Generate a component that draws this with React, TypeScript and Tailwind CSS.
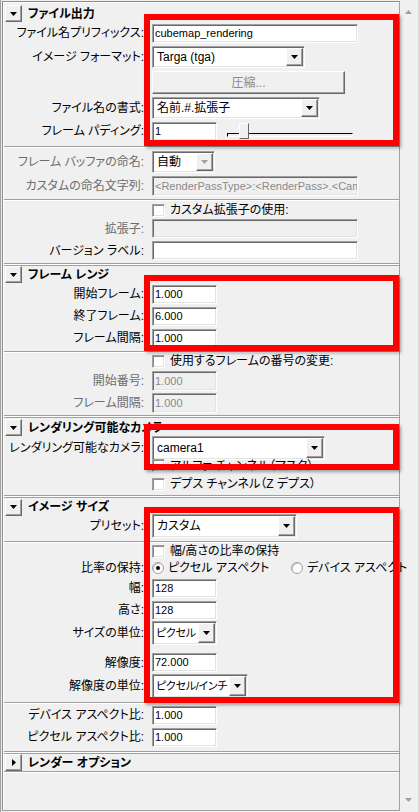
import React from "react";

const Arrow = ({ gray }: { gray?: boolean }) => (
  <svg width="7" height="4" viewBox="0 0 7 4">
    <path d="M0 0H7L3.5 4Z" fill={gray ? "#a0a0a0" : "#000"} />
  </svg>
);

function Label({ children, gray }: { children?: React.ReactNode; gray?: boolean }) {
  return (
    <div
      className={`w-[140px] shrink-0 text-right whitespace-nowrap text-[12px] leading-none ${
        gray ? "text-[#6d6d6d]" : "text-black"
      }`}
    >
      {children}
    </div>
  );
}

function Field({ cls, value, disabled }: { cls: string; value?: string; disabled?: boolean }) {
  return (
    <div
      className={`${cls} ml-[8px] shrink-0 flex items-center pl-[2px] text-[11px] leading-none overflow-hidden whitespace-nowrap border border-t-[#a0a0a0] border-l-[#a0a0a0] border-r-white border-b-white shadow-[inset_1px_1px_0_#696969,inset_-1px_-1px_0_#e3e3e3] ${
        disabled ? "bg-[#f0f0f0] text-[#8a8a8a]" : "bg-white text-black"
      }`}
    >
      {value}
    </div>
  );
}

function Dropdown({
  cls,
  value,
  disabled,
  small,
}: {
  cls: string;
  value: string;
  disabled?: boolean;
  small?: boolean;
}) {
  return (
    <div
      className={`${cls} ml-[8px] shrink-0 flex bg-white border border-t-[#a0a0a0] border-l-[#a0a0a0] border-r-white border-b-white shadow-[inset_1px_1px_0_#696969,inset_-1px_-1px_0_#e3e3e3] p-[1px]`}
    >
      <div
        className={`flex-1 flex items-center overflow-hidden whitespace-nowrap leading-none text-black ${
          small ? "text-[11px] pl-[2px] tracking-[-0.3px]" : "text-[12px] pl-[3px]"
        }`}
      >
        {value}
      </div>
      <div className="w-[17px] shrink-0 h-full flex items-center justify-center bg-[#f0f0f0] border border-t-white border-l-white border-r-[#696969] border-b-[#696969] shadow-[inset_-1px_-1px_0_#a0a0a0]">
        <Arrow gray={disabled} />
      </div>
    </div>
  );
}

function Check({ label }: { label: string }) {
  return (
    <div className="flex items-center pl-[148px]">
      <div className="w-[13px] h-[13px] shrink-0 bg-white border border-t-[#a0a0a0] border-l-[#a0a0a0] border-r-white border-b-white shadow-[inset_1px_1px_0_#8a8a8a,inset_-1px_-1px_0_#e3e3e3]" />
      <div className="ml-[5px] text-[12px] leading-none whitespace-nowrap text-black">{label}</div>
    </div>
  );
}

function Radio({ on }: { on?: boolean }) {
  return (
    <div className="w-[12px] h-[12px] shrink-0 rounded-full bg-white border border-[#a0a0a0] shadow-[inset_1px_1px_0_#c8c8c8] flex items-center justify-center">
      {on ? <div className="w-[4px] h-[4px] rounded-full bg-black" /> : null}
    </div>
  );
}

function Header({ title, cls, open = true }: { title: string; cls: string; open?: boolean }) {
  return (
    <div className={`${cls} shrink-0 flex items-center pl-[1px]`}>
      <div className="w-[17px] h-[17px] shrink-0 flex items-center justify-center bg-[#f0f0f0] border border-t-white border-l-white border-r-[#696969] border-b-[#696969] shadow-[inset_-1px_-1px_0_#a0a0a0]">
        {open ? (
          <Arrow />
        ) : (
          <svg width="4" height="7" viewBox="0 0 4 7">
            <path d="M0 0L4 3.5L0 7Z" fill="#000" />
          </svg>
        )}
      </div>
      <div className="ml-[6px] text-[12px] font-bold leading-none whitespace-nowrap text-black">{title}</div>
    </div>
  );
}

const Groove = () => (
  <div className="shrink-0">
    <div className="h-px bg-[#a0a0a0]" />
    <div className="h-px bg-white" />
  </div>
);

const Sep = () => (
  <div className="shrink-0">
    <div className="h-px bg-[#a0a0a0]" />
    <div className="h-px bg-white" />
    <div className="h-px bg-[#a0a0a0]" />
  </div>
);

function Row({ cls, children }: { cls: string; children: React.ReactNode }) {
  return <div className={`${cls} shrink-0 flex items-center`}>{children}</div>;
}

export default function App() {
  return (
    <div className="w-[419px] h-[812px] relative overflow-hidden bg-[#f0f0f0] flex font-['Liberation_Sans','Noto_Sans_CJK_JP',sans-serif] [font-feature-settings:'palt'] text-black">
      {/* main panel */}
      <div className="w-[400px] h-full flex flex-col border-l border-[#a0a0a0]">
        <div className="flex-1 flex flex-col ml-[1px] mt-[1px] mb-[1px] border-l border-t border-[#8c8c8c] border-r border-r-[#a0a0a0] border-b border-b-[#a0a0a0]">
          <div className="flex-1 flex flex-col border-l border-t border-white">
            {/* ファイル出力 */}
            <Header title="ファイル出力" cls="h-[21px]" />
            <Row cls="h-[18px]">
              <Label>ファイル名プリフィックス:</Label>
              <Field cls="w-[206px] h-[19px]" value="cubemap_rendering" />
            </Row>
            <Row cls="h-[29px]">
              <Label>イメージ フォーマット:</Label>
              <Dropdown cls="w-[153px] h-[22px]" value="Targa (tga)" />
            </Row>
            <Row cls="h-[23px]">
              <div className="w-[148px] shrink-0" />
              <div className="w-[193px] h-[23px] flex items-center justify-center bg-[#f0f0f0] border border-t-white border-l-white border-r-[#696969] border-b-[#696969] shadow-[inset_-1px_-1px_0_#a0a0a0] text-[12px] leading-none text-[#8d8d8d]">
                圧縮...
              </div>
            </Row>
            <Row cls="h-[27px]">
              <Label>ファイル名の書式:</Label>
              <Dropdown cls="w-[168px] h-[22px]" value="名前.#.拡張子" />
            </Row>
            <Row cls="h-[20px]">
              <Label>フレーム パディング:</Label>
              <Field cls="w-[65px] h-[19px]" value="1" />
              <div className="relative ml-[10px] w-[126px] h-[16px]">
                <div className="absolute left-0 right-0 top-[10px] h-[4px] border-t border-l border-t-black border-l-black border-b border-r border-b-white border-r-white" />
                <div className="absolute left-[12px] top-0 w-[10px] h-[16px] bg-[#f0f0f0] border border-t-white border-l-white border-r-[#696969] border-b-[#696969]" />
              </div>
            </Row>
            <div className="h-[5px] shrink-0" />
            <Groove />
            <Row cls="h-[28px]">
              <Label gray>フレーム バッファの命名:</Label>
              <Dropdown cls="w-[63px] h-[22px]" value="自動" disabled />
            </Row>
            <Row cls="h-[20px]">
              <Label gray>カスタムの命名文字列:</Label>
              <Field cls="w-[206px] h-[20px]" value="<RenderPassType>:<RenderPass>.<Camera>" disabled />
            </Row>
            <div className="h-[3px] shrink-0" />
            <Groove />
            <Row cls="h-[18px]">
              <Check label="カスタム拡張子の使用:" />
            </Row>
            <Row cls="h-[19px]">
              <Label gray>拡張子:</Label>
              <Field cls="w-[206px] h-[19px]" disabled />
            </Row>
            <Row cls="h-[25px]">
              <Label>バージョン ラベル:</Label>
              <Field cls="w-[206px] h-[19px]" />
            </Row>
            <Sep />

            {/* フレーム レンジ */}
            <Header title="フレーム レンジ" cls="h-[17px]" />
            <Row cls="h-[22px]">
              <Label>開始フレーム:</Label>
              <Field cls="w-[65px] h-[19px]" value="1.000" />
            </Row>
            <Row cls="h-[22px]">
              <Label>終了フレーム:</Label>
              <Field cls="w-[65px] h-[19px]" value="6.000" />
            </Row>
            <Row cls="h-[22px]">
              <Label>フレーム間隔:</Label>
              <Field cls="w-[65px] h-[19px]" value="1.000" />
            </Row>
            <div className="h-[2px] shrink-0" />
            <Groove />
            <Row cls="h-[16px]">
              <Check label="使用するフレームの番号の変更:" />
            </Row>
            <Row cls="h-[24px]">
              <Label gray>開始番号:</Label>
              <Field cls="w-[65px] h-[20px]" value="1.000" disabled />
            </Row>
            <Row cls="h-[20px]">
              <Label gray>フレーム間隔:</Label>
              <Field cls="w-[65px] h-[20px]" value="1.000" disabled />
            </Row>
            <div className="h-[2px] shrink-0" />
            <Sep />

            {/* レンダリング可能なカメラ */}
            <Header title="レンダリング可能なカメラ" cls="h-[19px]" />
            <Row cls="h-[21px]">
              <Label>レンダリング可能なカメラ:</Label>
              <Dropdown cls="w-[173px] h-[24px]" value="camera1" />
            </Row>
            <Row cls="h-[15px]">
              <Check label="アルファ チャンネル（マスク）" />
            </Row>
            <Row cls="h-[22px]">
              <Check label="デプス チャンネル（Z デプス）" />
            </Row>
            <Sep />

            {/* イメージ サイズ */}
            <Header title="イメージ サイズ" cls="h-[18px]" />
            <Row cls="h-[20px]">
              <Label>プリセット:</Label>
              <Dropdown cls="w-[145px] h-[24px]" value="カスタム" />
            </Row>
            <div className="h-[5px] shrink-0" />
            <Groove />
            <Row cls="h-[16px]">
              <Check label="幅/高さの比率の保持" />
            </Row>
            <Row cls="h-[18px]">
              <Label>比率の保持:</Label>
              <div className="ml-[8px] w-[139px] shrink-0 flex items-center">
                <Radio on />
                <div className="ml-[4px] text-[12px] leading-none whitespace-nowrap">ピクセル アスペクト</div>
              </div>
              <div className="flex items-center">
                <Radio />
                <div className="ml-[4px] text-[12px] leading-none whitespace-nowrap">デバイス アスペクト</div>
              </div>
            </Row>
            <Row cls="h-[22px]">
              <Label>幅:</Label>
              <Field cls="w-[65px] h-[19px]" value="128" />
            </Row>
            <Row cls="h-[22px]">
              <Label>高さ:</Label>
              <Field cls="w-[65px] h-[19px]" value="128" />
            </Row>
            <Row cls="h-[24px]">
              <Label>サイズの単位:</Label>
              <Dropdown cls="w-[65px] h-[24px]" value="ピクセル" small />
            </Row>
            <Row cls="h-[21px] mt-[7px]">
              <Label>解像度:</Label>
              <Field cls="w-[65px] h-[19px]" value="72.000" />
            </Row>
            <Row cls="h-[26px]">
              <Label>解像度の単位:</Label>
              <Dropdown cls="w-[96px] h-[24px]" value="ピクセル/インチ" small />
            </Row>
            <div className="h-[3px] shrink-0" />
            <Groove />
            <Row cls="h-[22px]">
              <Label>デバイス アスペクト比:</Label>
              <Field cls="w-[65px] h-[19px]" value="1.000" />
            </Row>
            <Row cls="h-[22px]">
              <Label>ピクセル アスペクト比:</Label>
              <Field cls="w-[65px] h-[19px]" value="1.000" />
            </Row>
            <div className="h-[3px] shrink-0" />
            <Sep />

            {/* レンダー オプション */}
            <Header title="レンダー オプション" cls="h-[17px]" open={false} />
            <Groove />
            <div className="flex-1" />
          </div>
        </div>
      </div>

      {/* scrollbar */}
      <div className="w-[19px] h-full flex flex-col items-center justify-between pt-[10px] pb-[10px] pr-[2px] border-r border-[#dcdcdc]">
        <svg width="7" height="4" viewBox="0 0 7 4">
          <path d="M0 4H7L3.5 0Z" fill="#a0a0a0" />
        </svg>
        <svg width="7" height="4" viewBox="0 0 7 4">
          <path d="M0 0H7L3.5 4Z" fill="#a0a0a0" />
        </svg>
      </div>

      {/* red annotation boxes */}
      <div className="absolute left-[144px] top-[14px] w-[255px] h-[132px] border-[6px] border-[#ff0000] shadow-[2px_2px_3px_rgba(0,0,0,0.35)] pointer-events-none" />
      <div className="absolute left-[144px] top-[275px] w-[255px] h-[76px] border-[6px] border-[#ff0000] shadow-[2px_2px_3px_rgba(0,0,0,0.35)] pointer-events-none" />
      <div className="absolute left-[144px] top-[424px] w-[255px] h-[46px] border-[6px] border-[#ff0000] shadow-[2px_2px_3px_rgba(0,0,0,0.35)] pointer-events-none" />
      <div className="absolute left-[144px] top-[507px] w-[255px] h-[196px] border-[6px] border-[#ff0000] shadow-[2px_2px_3px_rgba(0,0,0,0.35)] pointer-events-none" />
    </div>
  );
}
